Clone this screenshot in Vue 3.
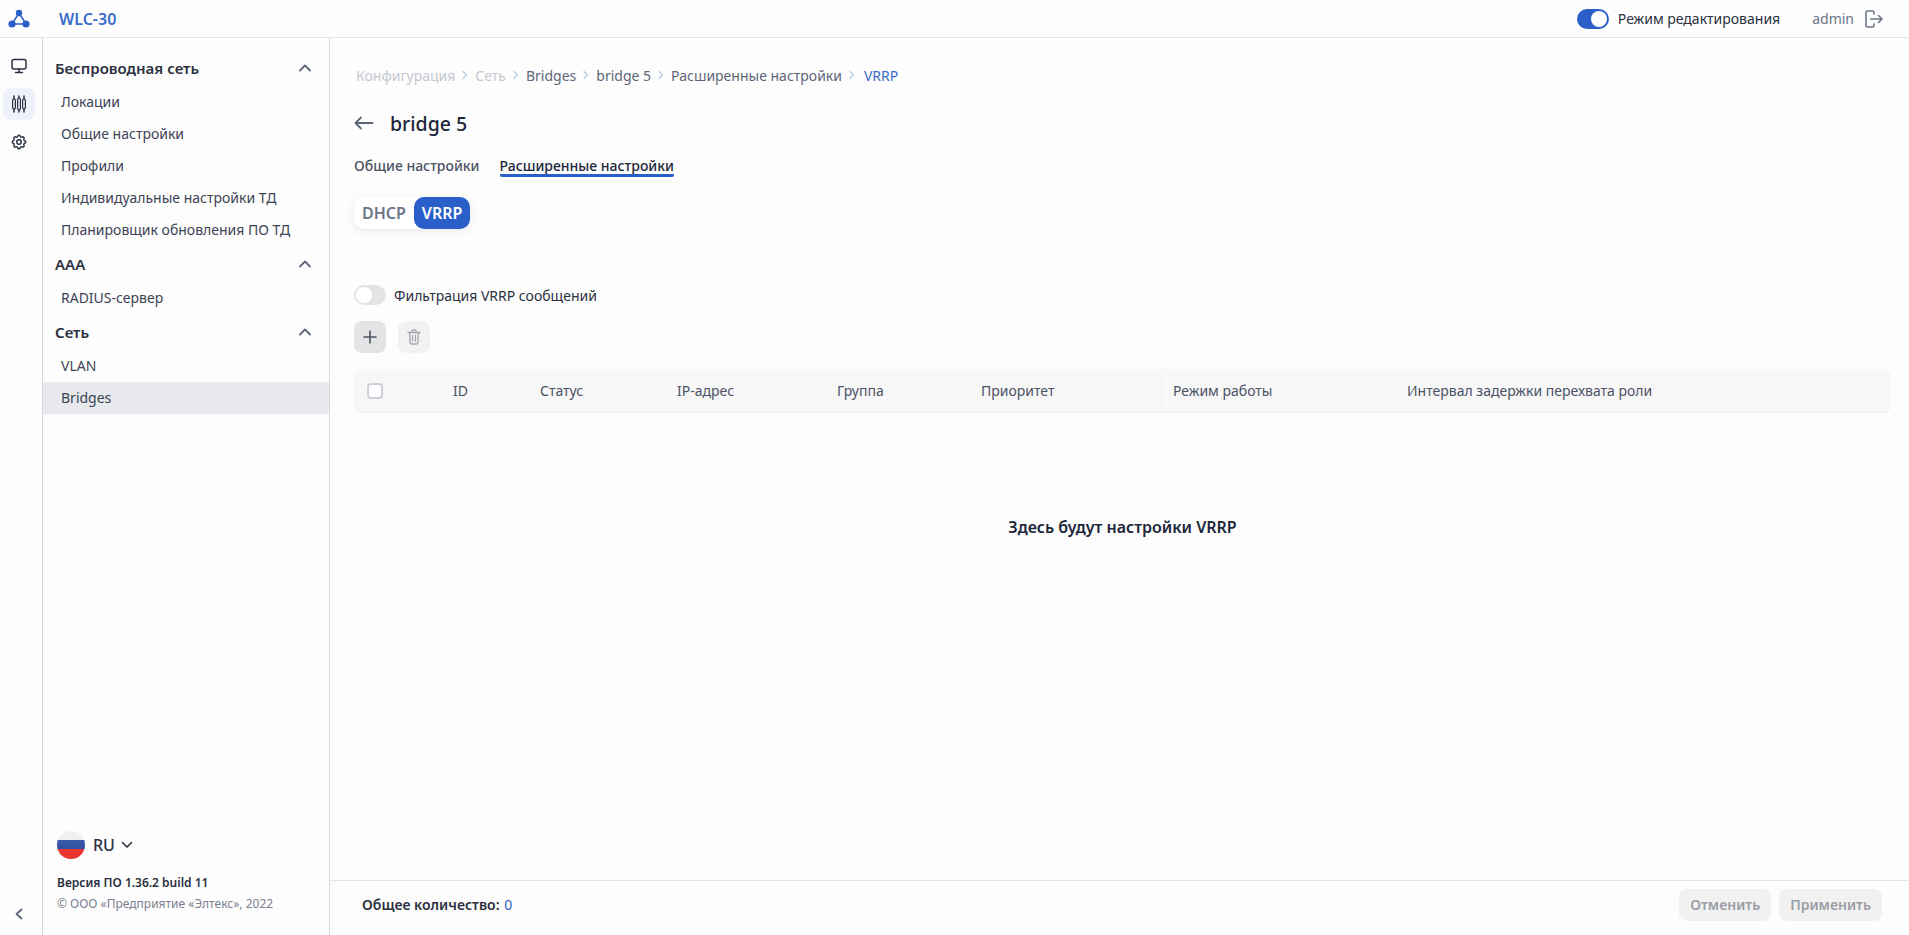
<template>
  <div class="page">
    <header class="topbar">
      <div class="logo">
        <svg width="22" height="20" viewBox="0 0 22 20">
          <path d="M11 4 L4 15 H18 Z" fill="none" stroke="#2b5fc7" stroke-width="1.5" />
          <circle cx="11" cy="4" r="3.2" fill="#2b5fc7" />
          <circle cx="4" cy="15" r="3.6" fill="#2b5fc7" />
          <circle cx="18" cy="15" r="3.6" fill="#2b5fc7" />
        </svg>
      </div>
      <div class="product">WLC-30</div>
      <div class="top-right">
        <span class="switch on"><i></i></span>
        <span class="mode">Режим редактирования</span>
        <span class="user">admin</span>
        <svg class="logout" width="20" height="20" viewBox="0 0 20 20" fill="none" stroke="#6b7488" stroke-width="1.6" stroke-linecap="round" stroke-linejoin="round">
          <path d="M11 5V3.500A1.500 1.500 0 0 0 9.500 2H4.500A1.500 1.500 0 0 0 3 3.500v13A1.500 1.500 0 0 0 4.500 18h5a1.500 1.500 0 0 0 1.500-1.500V15" />
          <path d="M7.500 10H19M15.500 6.500 19 10l-3.500 3.500" />
        </svg>
      </div>
    </header>

    <div class="body">
      <nav class="rail">
        <div class="rail-top">
          <button class="rail-btn">
            <svg width="18" height="18" viewBox="0 0 18 18" fill="none" stroke="#2a3040" stroke-width="1.500" stroke-linecap="round" stroke-linejoin="round">
              <rect x="2" y="2.500" width="14" height="9.500" rx="2" />
              <path d="M9 12v3M5.500 15.500h7" />
            </svg>
          </button>
          <button class="rail-btn active">
            <svg width="18" height="20" viewBox="0 0 18 20" fill="none" stroke="#2a3040" stroke-width="1.200" stroke-linecap="round">
              <path d="M4 2v3M4 15v3M9 2v2M9 16v2M14 2v3M14 15v3" stroke-width="1.500" />
              <rect x="2.600" y="5" width="2.800" height="10" rx="1.400" />
              <rect x="7.600" y="4" width="2.800" height="12" rx="1.400" />
              <rect x="12.600" y="5" width="2.800" height="10" rx="1.400" />
            </svg>
          </button>
          <button class="rail-btn">
            <svg width="18" height="18" viewBox="0 0 24 24" fill="none" stroke="#2a3040" stroke-width="1.900" stroke-linecap="round" stroke-linejoin="round">
              <path d="M10.325 4.317c.426-1.756 2.924-1.756 3.350 0a1.724 1.724 0 0 0 2.573 1.066c1.543-.940 3.310.826 2.370 2.370a1.724 1.724 0 0 0 1.065 2.572c1.756.426 1.756 2.924 0 3.350a1.724 1.724 0 0 0-1.066 2.573c.940 1.543-.826 3.310-2.370 2.370a1.724 1.724 0 0 0-2.572 1.065c-.426 1.756-2.924 1.756-3.350 0a1.724 1.724 0 0 0-2.573-1.066c-1.543.940-3.310-.826-2.370-2.370a1.724 1.724 0 0 0-1.065-2.572c-1.756-.426-1.756-2.924 0-3.350a1.724 1.724 0 0 0 1.066-2.573c-.940-1.543.826-3.310 2.370-2.370 1 .608 2.296.070 2.572-1.065z" />
              <circle cx="12" cy="12" r="3" />
            </svg>
          </button>
        </div>
        <svg class="collapse" width="12" height="14" viewBox="0 0 12 14" fill="none" stroke="#5d6678" stroke-width="1.800" stroke-linecap="round" stroke-linejoin="round">
          <path d="M8.500 2.500 3.500 7l5 4.500" />
        </svg>
      </nav>

      <aside class="side">
        <div class="menu">
          <template v-for="group in menu" :key="group.title">
            <div class="group-head">
              <span>{{ group.title }}</span>
              <svg width="14" height="10" viewBox="0 0 14 10" fill="none" stroke="#5d6678" stroke-width="1.800" stroke-linecap="round" stroke-linejoin="round">
                <path d="M2 7.500 7 2.500l5 5" />
              </svg>
            </div>
            <div
              v-for="item in group.items"
              :key="item"
              :class="['menu-item', { selected: item === 'Bridges' }]"
            >
              {{ item }}
            </div>
          </template>
        </div>
        <div class="side-foot">
          <div class="lang">
            <span class="flag"></span>
            <span class="lang-code">RU</span>
            <svg class="lang-arrow" width="12" height="8" viewBox="0 0 12 8" fill="none" stroke="#2a3040" stroke-width="1.600" stroke-linecap="round" stroke-linejoin="round">
              <path d="M1.500 1.500 6 6l4.500-4.500" />
            </svg>
          </div>
          <div class="version">Версия ПО 1.36.2 build 11</div>
          <div class="copyright">© ООО «Предприятие «Элтекс», 2022</div>
        </div>
      </aside>

      <main class="main">
        <div class="content">
          <div class="crumbs">
            <template v-for="(crumb, i) in crumbs" :key="crumb.text">
              <svg v-if="i" class="crumb-sep" width="8" height="10" viewBox="0 0 8 10" fill="none" stroke="#b9c8e6" stroke-width="1.200" stroke-linecap="round" stroke-linejoin="round">
                <path d="M2 1.500 5.500 5 2 8.500" />
              </svg>
              <span :class="crumb.kind">{{ crumb.text }}</span>
            </template>
          </div>

          <div class="title-row">
            <svg width="20" height="14" viewBox="0 0 20 14" fill="none" stroke="#5d6678" stroke-width="1.800" stroke-linecap="round" stroke-linejoin="round">
              <path d="M18.500 7H1.500M7 1.500 1.500 7 7 12.500" />
            </svg>
            <h1>bridge 5</h1>
          </div>

          <div class="tabs">
            <span class="tab">Общие настройки</span>
            <span class="tab current">Расширенные настройки</span>
          </div>

          <div class="segment">
            <span class="seg">DHCP</span>
            <span class="seg on">VRRP</span>
          </div>

          <div class="filter">
            <span class="switch"><i></i></span>
            <span>Фильтрация VRRP сообщений</span>
          </div>

          <div class="actions">
            <button class="icon-btn add">
              <svg width="14" height="14" viewBox="0 0 14 14" fill="none" stroke="#4b5263" stroke-width="1.600" stroke-linecap="round">
                <path d="M7 1v12M1 7h12" />
              </svg>
            </button>
            <button class="icon-btn">
              <svg width="14" height="16" viewBox="0 0 14 16" fill="none" stroke="#a3a6ad" stroke-width="1.300" stroke-linecap="round" stroke-linejoin="round">
                <path d="M1 3.500h12M5 3.500V2a1 1 0 0 1 1-1h2a1 1 0 0 1 1 1v1.500M2.500 3.500l.6 10a1.500 1.500 0 0 0 1.500 1.500h4.800a1.500 1.500 0 0 0 1.500-1.500l.6-10M5.500 6.500v5.500M8.500 6.500v5.500" />
              </svg>
            </button>
          </div>

          <div class="table-head">
            <div class="cell check-cell"><span class="checkbox"></span></div>
            <div v-for="col in columns" :key="col.text" :class="['cell', col.cls]">{{ col.text }}</div>
          </div>

          <div class="placeholder">Здесь будут настройки VRRP</div>
        </div>

        <footer class="foot">
          <div class="total">Общее количество: <b>0</b></div>
          <div class="foot-btns">
            <button class="foot-btn">Отменить</button>
            <button class="foot-btn">Применить</button>
          </div>
        </footer>
      </main>
    </div>
  </div>
</template>

<script setup>
const menu = [
  {
    title: "Беспроводная сеть",
    items: [
      "Локации",
      "Общие настройки",
      "Профили",
      "Индивидуальные настройки ТД",
      "Планировщик обновления ПО ТД",
    ],
  },
  { title: "AAA", items: ["RADIUS-сервер"] },
  { title: "Сеть", items: ["VLAN", "Bridges"] },
];

const crumbs = [
  { text: "Конфигурация", kind: "faint" },
  { text: "Сеть", kind: "faint" },
  { text: "Bridges", kind: "plain" },
  { text: "bridge 5", kind: "plain" },
  { text: "Расширенные настройки", kind: "plain" },
  { text: "VRRP", kind: "last" },
];

const columns = [
  { text: "ID", cls: "c-id" },
  { text: "Статус", cls: "c-status" },
  { text: "IP-адрес", cls: "c-ip" },
  { text: "Группа", cls: "c-group" },
  { text: "Приоритет", cls: "c-prio" },
  { text: "Режим работы", cls: "c-mode" },
  { text: "Интервал задержки перехвата роли", cls: "c-rest" },
];
</script>

<style>
html,
body {
  margin: 0;
  background: #fdfdfd;
}
</style>

<style scoped>
.page {
  display: flex;
  flex-direction: column;
  height: 935px;
  overflow: hidden;
  font-family: "Noto Sans", sans-serif;
  font-size: 14px;
  color: #2a3040;
  background: #fdfdfd;
}

.topbar {
  display: flex;
  align-items: center;
  flex: none;
  height: 37px;
  border-bottom: 1px solid #e6e6e8;
  background: #fefefe;
}
.logo {
  display: flex;
  justify-content: center;
  width: 38px;
}
.product {
  margin-left: 21px;
  font-size: 16px;
  font-weight: 600;
  color: #3b6ccb;
}
.top-right {
  display: flex;
  align-items: center;
  margin-left: auto;
  padding-right: 26px;
}
.mode {
  margin-left: 9px;
}
.user {
  margin-left: 32px;
  color: #6b7488;
}
.logout {
  margin-left: 9px;
}

.switch {
  display: inline-flex;
  align-items: center;
  flex: none;
  box-sizing: border-box;
  width: 32px;
  height: 20px;
  padding: 2px;
  border-radius: 10px;
  background: #e4e4e6;
}
.switch i {
  width: 16px;
  height: 16px;
  border-radius: 50%;
  background: #fff;
}
.switch.on {
  justify-content: flex-end;
  background: #2a5fc9;
}

.body {
  display: flex;
  flex: 1;
  min-height: 0;
}

.rail {
  display: flex;
  flex-direction: column;
  align-items: center;
  flex: none;
  box-sizing: border-box;
  width: 43px;
  padding: 12px 7px 0 3px;
  border-right: 1px solid #d5d8e2;
}
.rail-top {
  display: flex;
  flex-direction: column;
  gap: 6px;
}
.rail-btn {
  display: flex;
  align-items: center;
  justify-content: center;
  width: 32px;
  height: 32px;
  padding: 0;
  border: none;
  border-radius: 8px;
  background: transparent;
}
.rail-btn.active {
  background: #eef2fb;
}
.collapse {
  margin-top: auto;
  margin-bottom: 14px;
}

.side {
  display: flex;
  flex-direction: column;
  flex: none;
  box-sizing: border-box;
  width: 287px;
  border-right: 1px solid #d8dae2;
}
.menu {
  padding-top: 12px;
}
.group-head {
  display: flex;
  align-items: center;
  justify-content: space-between;
  height: 36px;
  padding: 0 17px 0 12px;
  font-size: 15px;
  font-weight: 600;
}
.menu-item {
  height: 32px;
  padding-left: 18px;
  line-height: 32px;
  color: #3c4354;
}
.menu-item.selected {
  background: #e8e9ed;
}
.side-foot {
  margin-top: auto;
  padding: 0 0 23px 14px;
}
.lang {
  display: flex;
  align-items: center;
  gap: 8px;
  font-size: 16px;
  font-weight: 500;
}
.lang-arrow {
  margin-left: -2px;
}
.flag {
  width: 28px;
  height: 28px;
  border-radius: 50%;
  background: linear-gradient(#f0f0f2 33%, #3a5aa8 33%, #2f4fa3 66%, #e8352f 66%);
}
.version {
  margin-top: 15px;
  font-size: 12px;
  font-weight: 600;
}
.copyright {
  margin-top: 4px;
  font-size: 12px;
  color: #79808f;
}

.main {
  display: flex;
  flex-direction: column;
  flex: 1;
  min-width: 0;
}
.content {
  flex: 1;
  min-height: 0;
  padding: 27px 18px 0 24px;
}

.crumbs {
  display: flex;
  align-items: center;
  gap: 6px;
  height: 20px;
  margin-left: 2px;
}
.faint {
  color: #c4c7cf;
}
.plain {
  color: #5d6678;
}
.last {
  margin-left: 2px;
  color: #3b6ccb;
}
.crumb-sep {
  flex: none;
}

.title-row {
  display: flex;
  align-items: center;
  gap: 16px;
  height: 30px;
  margin-top: 23px;
}
.title-row h1 {
  margin: 0;
  font-size: 19.5px;
  font-weight: 500;
  color: #20263a;
}

.tabs {
  display: flex;
  gap: 20px;
  margin-top: 20px;
}
.tab {
  border-bottom: 3px solid transparent;
  border-radius: 0 0 2px 2px;
  font-size: 14px;
  font-weight: 500;
  line-height: 16px;
  color: #4b5263;
}
.tab.current {
  border-bottom-color: #2a5fc9;
  color: #20263a;
}

.segment {
  display: flex;
  width: fit-content;
  height: 32px;
  margin-top: 20px;
  border-radius: 10px;
  background: #fff;
  box-shadow: 0 2px 8px rgba(60, 80, 140, 0.12);
  font-size: 16px;
  font-weight: 600;
  line-height: 32px;
}
.seg {
  padding: 0 8px;
  color: #6b7488;
}
.seg.on {
  border-radius: 10px;
  background: #2a5fc9;
  color: #fff;
}

.filter {
  display: flex;
  align-items: center;
  gap: 8px;
  margin-top: 56px;
}
.actions {
  display: flex;
  gap: 12px;
  margin-top: 16px;
}
.icon-btn {
  display: flex;
  align-items: center;
  justify-content: center;
  width: 32px;
  height: 32px;
  padding: 0;
  border: none;
  border-radius: 8px;
  background: #f2f2f3;
}
.icon-btn.add {
  background: #e4e4e6;
}

.table-head {
  display: flex;
  align-items: center;
  box-sizing: border-box;
  height: 44px;
  margin-top: 16px;
  border-bottom: 1px solid #e5eefb;
  border-radius: 8px;
  background: #f7f7f8;
  color: #4b5263;
}
.cell {
  display: flex;
  align-items: center;
  flex: none;
  height: 100%;
}
.check-cell {
  width: 99px;
  padding-left: 13px;
  box-sizing: border-box;
}
.checkbox {
  box-sizing: border-box;
  width: 16px;
  height: 16px;
  border: 2px solid #cdd0db;
  border-radius: 4px;
  background: #fff;
}
.c-id {
  width: 87px;
}
.c-status {
  width: 137px;
}
.c-ip {
  width: 160px;
}
.c-group {
  width: 144px;
}
.c-prio {
  width: 185px;
}
.c-mode {
  box-sizing: border-box;
  width: 241px;
  padding-left: 6px;
  border-left: 1px solid #fdfdfd;
}
.c-rest {
  flex: 1;
}

.placeholder {
  margin-top: 102px;
  text-align: center;
  font-size: 16px;
  font-weight: 600;
  line-height: 24px;
  color: #20263a;
}

.foot {
  display: flex;
  align-items: center;
  justify-content: space-between;
  flex: none;
  box-sizing: border-box;
  height: 55px;
  padding: 0 27px 7px 32px;
  border-top: 1px solid #e6e6e8;
}
.total {
  padding-bottom: 1px;
  font-weight: 600;
}
.total b {
  margin-left: 1px;
  font-weight: 400;
  color: #2a5fc9;
}
.foot-btns {
  display: flex;
  gap: 8px;
}
.foot-btn {
  height: 32px;
  padding: 0 11px;
  border: none;
  border-radius: 8px;
  background: #f1f1f2;
  font-family: inherit;
  font-size: 14px;
  font-weight: 600;
  color: #9a9da4;
}
</style>
